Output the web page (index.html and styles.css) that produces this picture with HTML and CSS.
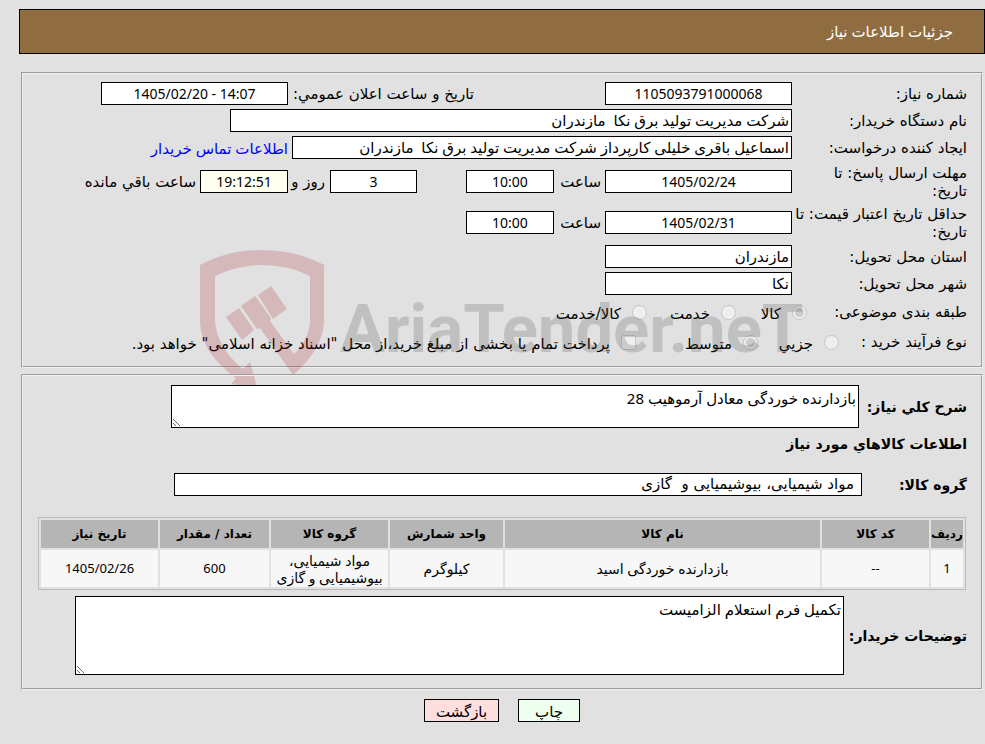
FILE: index.html
```html
<!DOCTYPE html>
<html lang="fa" dir="rtl">
<head>
  <meta charset="UTF-8">
  <meta name="viewport" content="width=device-width, initial-scale=1.0">
  <title>جزئیات اطلاعات نیاز</title>
  <link rel="stylesheet" href="styles.css">
</head>
<body>
  <header class="title-bar">جزئیات اطلاعات نیاز</header>

  <form>
    <!-- Request details -->
    <fieldset class="panel details">
      <div class="row">
        <label class="caption" for="need-no">شماره نیاز:</label>
        <input class="field center" id="need-no" type="text" value="1105093791000068" readonly>
        <label class="caption-announce" for="announce">تاريخ و ساعت اعلان عمومي:</label>
        <input class="field center" id="announce" type="text" dir="ltr" value="1405/02/20 - 14:07" readonly>
      </div>
      <div class="row">
        <label class="caption" for="buyer">نام دستگاه خریدار:</label>
        <input class="field buyer" id="buyer" type="text" value="شرکت مدیریت تولید برق نکا  مازندران" readonly>
      </div>
      <div class="row">
        <label class="caption" for="creator">ایجاد کننده درخواست:</label>
        <input class="field creator" id="creator" type="text" value="اسماعیل باقری خلیلی کارپرداز شرکت مدیریت تولید برق نکا  مازندران" readonly>
        <a class="contact" href="#">اطلاعات تماس خریدار</a>
      </div>
      <div class="row tall">
        <label class="caption" for="reply-date">مهلت ارسال پاسخ: تا<br>تاریخ:</label>
        <input class="field center" id="reply-date" type="text" value="1405/02/24" readonly>
        <label class="unit" for="reply-time">ساعت</label>
        <input class="field short center" id="reply-time" type="text" value="10:00" readonly>
        <input class="field short center days" id="days" type="text" value="3" readonly>
        <label class="unit-days" for="days">روز و</label>
        <input class="field short center countdown" id="countdown" type="text" value="19:12:51" readonly>
        <label class="remaining" for="countdown">ساعت باقي مانده</label>
      </div>
      <div class="row tall">
        <label class="caption" for="price-date">حداقل تاریخ اعتبار قیمت: تا<br>تاریخ:</label>
        <input class="field center" id="price-date" type="text" value="1405/02/31" readonly>
        <label class="unit" for="price-time">ساعت</label>
        <input class="field short center" id="price-time" type="text" value="10:00" readonly>
      </div>
      <div class="row">
        <label class="caption" for="province">استان محل تحویل:</label>
        <input class="field" id="province" type="text" value="مازندران" readonly>
      </div>
      <div class="row">
        <label class="caption" for="city">شهر محل تحویل:</label>
        <input class="field" id="city" type="text" value="نکا" readonly>
      </div>
      <div class="row options">
        <span class="caption-options">طبقه بندی موضوعی:</span>
        <label class="option goods"><input type="radio" name="subject" checked disabled>کالا</label>
        <label class="option service"><input type="radio" name="subject" disabled>خدمت</label>
        <label class="option"><input type="radio" name="subject" disabled>کالا/خدمت</label>
      </div>
      <div class="row options">
        <span class="caption-process">نوع فرآیند خرید :</span>
        <label class="option minor"><input type="radio" name="process" disabled>جزیي</label>
        <label class="option medium"><input type="radio" name="process" checked disabled>متوسط</label>
        <label class="option"><input type="checkbox" disabled>پرداخت تمام یا بخشی از مبلغ خرید،از محل "اسناد خزانه اسلامی" خواهد بود.</label>
      </div>

      <svg class="watermark" viewBox="195 245 610 145" width="610" height="145" direction="ltr" aria-hidden="true">
        <g class="shield">
          <path d="M200 265Q228 250 262 250Q296 250 324 265V320C324 341 310 361 293 375L260 328L257 329L241 306L255 296L271 318L270 321L294 354C304 344 310 333 310 320V276Q288 265 262 265Q238 265 215 276V320C216 340 228 357 243 369L250 362L257 387L231 384L236 378C216 363 200 345 200 320Z"/>
          <path d="M226 317L239 308L254 330L242 340Z"/>
          <path d="M258 295L271 286L287 309L273 319Z"/>
        </g>
        <text x="340" y="352">AriaTender.neT</text>
      </svg>
    </fieldset>

    <!-- Requested goods -->
    <fieldset class="panel goods-panel">
      <div class="row">
        <label class="heading" for="summary">شرح کلي نیاز:</label>
        <textarea class="field summary" id="summary" readonly>بازدارنده خوردگی معادل آرموهیب 28</textarea>
      </div>
      <h2>اطلاعات کالاهاي مورد نیاز</h2>
      <div class="row">
        <label class="heading group-label" for="group">گروه کالا:</label>
        <input class="field group" id="group" type="text" value="مواد شیمیایی، بیوشیمیایی و  گازی" readonly>
      </div>

      <table>
        <colgroup>
          <col class="col-row"><col class="col-code"><col><col class="col-unit"><col class="col-group"><col class="col-count"><col class="col-date">
        </colgroup>
        <thead>
          <tr>
            <th>ردیف</th>
            <th>کد کالا</th>
            <th>نام کالا</th>
            <th>واحد شمارش</th>
            <th>گروه کالا</th>
            <th>تعداد / مقدار</th>
            <th>تاریخ نیاز</th>
          </tr>
        </thead>
        <tbody>
          <tr>
            <td class="number">1</td>
            <td class="number">--</td>
            <td>بازدارنده خوردگی اسید</td>
            <td>کیلوگرم</td>
            <td>مواد شیمیایی،<br>بیوشیمیایی و گازی</td>
            <td class="number">600</td>
            <td class="number">1405/02/26</td>
          </tr>
        </tbody>
      </table>

      <div class="row">
        <label class="heading notes-label" for="notes">توضیحات خریدار:</label>
        <textarea class="field notes" id="notes" readonly>تکمیل فرم استعلام الزامیست</textarea>
      </div>
    </fieldset>

    <div class="actions">
      <button type="button" class="print">چاپ</button>
      <button type="button" class="back">بازگشت</button>
    </div>
  </form>
</body>
</html>
```
FILE: styles.css
```css
* {
  box-sizing: border-box;
}

body {
  margin: 9px 0 0 19px;
  background-color: #e1e1e1;
  color: #000;
  font-family: "Noto Sans", "DejaVu Sans", sans-serif;
  font-size: 15px;
  line-height: 18px;
}

.title-bar {
  height: 45px;
  padding: 12px 31px;
  border: 1px solid #000;
  background-color: #8f6d40;
  color: #fff;
}

/* Panels */
.panel {
  position: relative;
  display: flex;
  flex-direction: column;
  min-width: 0;
  margin: 0 2px 0 2px;
  padding: 8px 14px;
  border: 2px groove #f0f0f0;
}

.details {
  gap: 4px;
  height: 296px;
  margin-top: 18px;
}

.goods-panel {
  height: 316px;
  margin-top: 6px;
  padding-top: 9px;
}

.row {
  display: flex;
  align-items: center;
  white-space: nowrap;
}

.row label,
.row span,
.group {
  font-family: "DejaVu Sans", sans-serif;
}

.tall {
  height: 37px;
}

.caption {
  flex: none;
  width: 175px;
}

/* Text boxes */
.field {
  flex: none;
  width: 187px;
  height: 23px;
  margin: 0;
  padding: 0 2px 2px;
  border: 1px solid #000;
  border-radius: 0;
  background-color: #fff;
  color: #000;
  font: inherit;
}

.center {
  padding: 1px 2px;
  font-size: 14px;
  text-align: center;
}

.buyer {
  width: 562px;
}

.creator {
  width: 500px;
}

.short {
  width: 88px;
}

.days {
  width: 87px;
  margin-right: 49px;
}

.countdown {
  background-color: #fffff0;
}

.caption-announce {
  width: 186px;
  margin-right: 131px;
}

.contact {
  margin-right: 4px;
  color: #00f;
  text-decoration: none;
}

.unit {
  width: 51px;
  padding-right: 4px;
}

.unit-days {
  width: 42px;
  padding-right: 5px;
}

.remaining {
  padding-right: 4px;
}

/* Radio buttons and tick box */
.options {
  height: 26px;
}

.caption-options {
  width: 160px;
}

.caption-process {
  width: 128px;
}

.option {
  display: flex;
  align-items: center;
  gap: 11px;
  padding-top: 4px;
}

.option input {
  flex: none;
  width: 15px;
  height: 15px;
  margin: 0 0 4px;
}

.goods {
  width: 71px;
}

.service {
  width: 89px;
}

.minor {
  width: 81px;
}

.medium {
  width: 122px;
}

/* Watermark */
.watermark {
  position: absolute;
  top: 171px;
  right: 176px;
  overflow: visible;
  opacity: 0.2;
  pointer-events: none;
}

.watermark text {
  fill: #414141;
  font-family: Roboto, sans-serif;
  font-size: 67px;
  font-weight: bold;
}

.shield {
  fill: #aa1c20;
}

/* Goods */
h2,
.heading {
  margin: 0;
  font-family: "DejaVu Sans", sans-serif;
  font-size: 14px;
  font-weight: bold;
}

h2 {
  padding: 7px 0 20px;
}

.heading {
  width: 108px;
}

.group-label {
  width: 105px;
}

.notes-label {
  width: 123px;
}

.group {
  width: 688px;
  padding-right: 7px;
  font-family: "DejaVu Sans", sans-serif;
}

textarea.field {
  padding: 3px 2px;
}

.summary {
  width: 688px;
  height: 43px;
}

.notes {
  width: 769px;
  height: 79px;
}

table {
  width: 928px;
  margin: 21px 1px 6px;
  border: 1px solid #bbb;
  border-spacing: 2px;
  table-layout: fixed;
  font-size: 14px;
  line-height: 17px;
  text-align: center;
}

th {
  height: 28px;
  padding: 0;
  background-color: #b5b5b5;
  font-family: "DejaVu Sans", sans-serif;
  font-size: 12px;
  white-space: nowrap;
}

td {
  height: 37px;
  padding: 0;
  background-color: #f7f7f7;
  white-space: nowrap;
}

.number {
  font-size: 13px;
}

.col-row {
  width: 32px;
}

.col-code {
  width: 107px;
}

.col-unit {
  width: 113px;
}

.col-group,
.col-date {
  width: 117px;
}

.col-count {
  width: 109px;
}

/* Buttons */
.actions {
  display: flex;
  gap: 19px;
  margin: 9px 405px 0 0;
}

button {
  height: 23px;
  padding: 0;
  border: 1px solid #000;
  color: #000;
  font: inherit;
  cursor: pointer;
}

.print {
  width: 62px;
  background-color: #efffef;
}

.back {
  width: 75px;
  background-color: #ffdede;
}
```
